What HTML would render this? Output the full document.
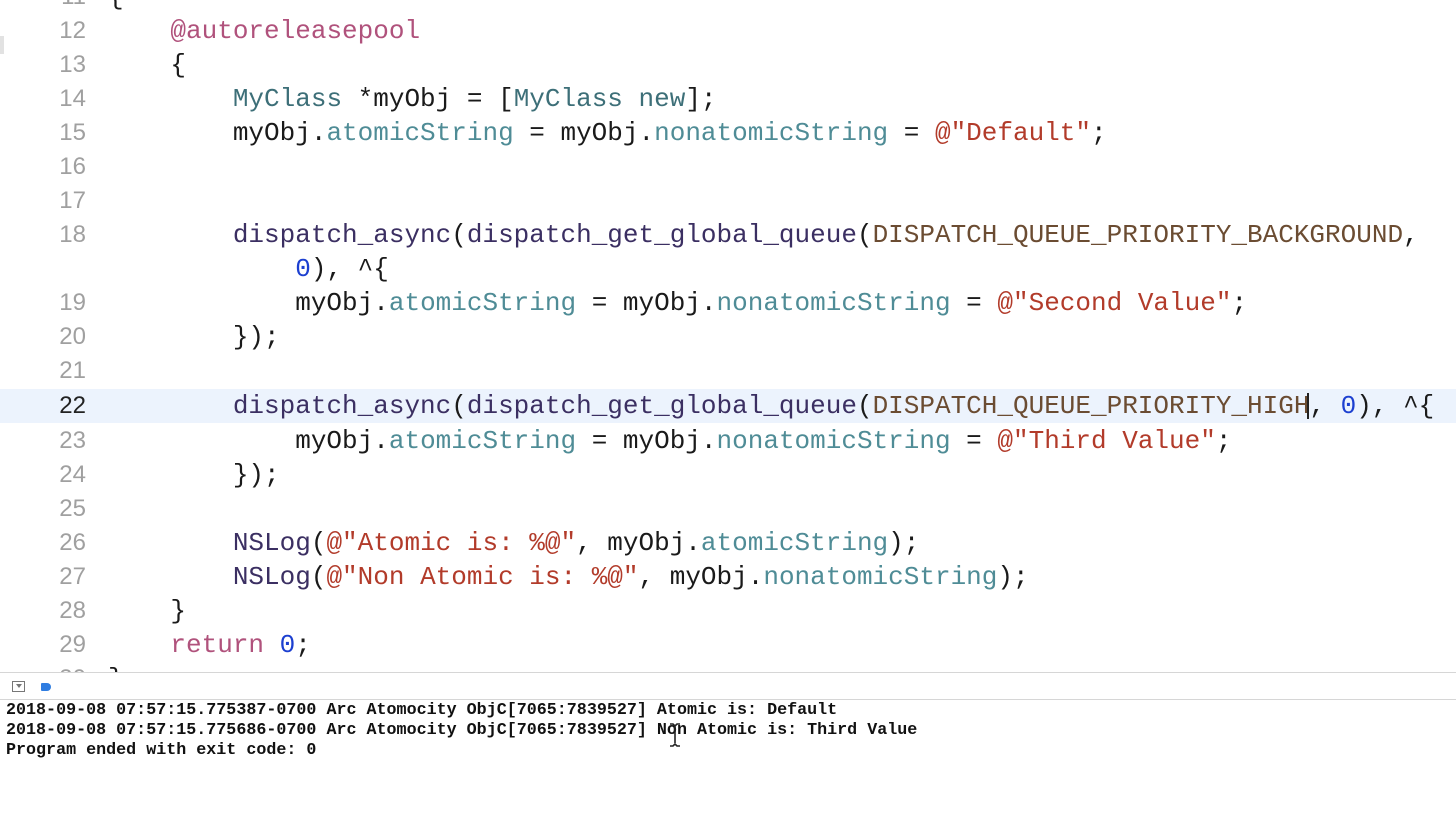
<!DOCTYPE html>
<html><head><meta charset="utf-8"><style>
body{margin:0;width:1456px;height:820px;overflow:hidden;background:#fff;position:relative;font-family:"Liberation Mono",monospace}
.r{position:absolute;left:0;width:1456px;height:34px;line-height:34px;font-size:26px;white-space:pre;color:#1a1a1a}
.n{position:absolute;left:0;width:86px;text-align:right;color:#a0a0a0;font-family:"Liberation Sans",sans-serif;font-size:24px}
.c{position:absolute;left:108px;letter-spacing:0}
.k{color:#b0527c}.t{color:#3d6f78}.p{color:#4f8c96}.s{color:#b23b2a}.m{color:#6b4c32}.d{color:#1c3fd0}.f{color:#3b2f62}
#con{position:absolute;left:0;top:672px;width:1456px;height:148px;background:#fff;border-top:1px solid #d6d6d6}
#bar{position:absolute;left:0;top:0;width:1456px;height:26px;border-bottom:1px solid #d6d6d6;background:#fff}
.cl{position:absolute;left:6px;font-size:16.7px;font-weight:bold;line-height:20px;white-space:pre;color:#111}
</style></head><body>
<div style="position:absolute;left:0;top:36px;width:4px;height:18px;background:#e2e2e2"></div>
<div class="r" style="top:-20px"><span class="n">11</span><span class="c">{</span></div>
<div class="r" style="top:14px"><span class="n">12</span><span class="c">    <span class="k">@autoreleasepool</span></span></div>
<div class="r" style="top:48px"><span class="n">13</span><span class="c">    {</span></div>
<div class="r" style="top:82px"><span class="n">14</span><span class="c">        <span class="t">MyClass</span> *myObj = [<span class="t">MyClass</span> <span class="t">new</span>];</span></div>
<div class="r" style="top:116px"><span class="n">15</span><span class="c">        myObj.<span class="p">atomicString</span> = myObj.<span class="p">nonatomicString</span> = <span class="s">@"Default"</span>;</span></div>
<div class="r" style="top:150px"><span class="n">16</span></div>
<div class="r" style="top:184px"><span class="n">17</span></div>
<div class="r" style="top:218px"><span class="n">18</span><span class="c">        <span class="f">dispatch_async</span>(<span class="f">dispatch_get_global_queue</span>(<span class="m">DISPATCH_QUEUE_PRIORITY_BACKGROUND</span>,</span></div>
<div class="r" style="top:252px"><span class="c">            <span class="d">0</span>), ^{</span></div>
<div class="r" style="top:286px"><span class="n">19</span><span class="c">            myObj.<span class="p">atomicString</span> = myObj.<span class="p">nonatomicString</span> = <span class="s">@"Second Value"</span>;</span></div>
<div class="r" style="top:320px"><span class="n">20</span><span class="c">        });</span></div>
<div class="r" style="top:354px"><span class="n">21</span></div>
<div class="r" style="top:389px;background:#ecf3fd"><span class="n" style="color:#222">22</span><span class="c">        <span class="f">dispatch_async</span>(<span class="f">dispatch_get_global_queue</span>(<span class="m">DISPATCH_QUEUE_PRIORITY_HIGH</span>, <span class="d">0</span>), ^{</span></div>
<div style="position:absolute;left:1307px;top:393px;width:2px;height:26px;background:#222"></div>
<div class="r" style="top:424px"><span class="n">23</span><span class="c">            myObj.<span class="p">atomicString</span> = myObj.<span class="p">nonatomicString</span> = <span class="s">@"Third Value"</span>;</span></div>
<div class="r" style="top:458px"><span class="n">24</span><span class="c">        });</span></div>
<div class="r" style="top:492px"><span class="n">25</span></div>
<div class="r" style="top:526px"><span class="n">26</span><span class="c">        <span class="f">NSLog</span>(<span class="s">@"Atomic is: %@"</span>, myObj.<span class="p">atomicString</span>);</span></div>
<div class="r" style="top:560px"><span class="n">27</span><span class="c">        <span class="f">NSLog</span>(<span class="s">@"Non Atomic is: %@"</span>, myObj.<span class="p">nonatomicString</span>);</span></div>
<div class="r" style="top:594px"><span class="n">28</span><span class="c">    }</span></div>
<div class="r" style="top:628px"><span class="n">29</span><span class="c">    <span class="k">return</span> <span class="d">0</span>;</span></div>
<div class="r" style="top:662px"><span class="n">30</span><span class="c">}</span></div>
<div id="con">
<div id="bar">
<div style="position:absolute;left:12px;top:8px;width:11px;height:9px;border:1px solid #777;background:#fff"><div style="position:absolute;left:3px;top:2px;width:0;height:0;border-left:3px solid transparent;border-right:3px solid transparent;border-top:4px solid #777"></div></div>
<div style="position:absolute;left:41px;top:10px;width:10px;height:8px;background:#2f7de1;border-radius:1px 4px 4px 1px"></div>
</div>
<div class="cl" style="top:28px">2018-09-08 07:57:15.775387-0700 Arc Atomocity ObjC[7065:7839527] Atomic is: Default</div>
<div class="cl" style="top:48px">2018-09-08 07:57:15.775686-0700 Arc Atomocity ObjC[7065:7839527] Non Atomic is: Third Value</div>
<div class="cl" style="top:68px">Program ended with exit code: 0</div>
<svg style="position:absolute;left:668px;top:50px" width="14" height="24" viewBox="0 0 14 24"><path d="M2 1h3l2 2 2-2h3M7 3v17M2 23h3l2-2 2 2h3" stroke="#222" stroke-width="1.6" fill="none"/></svg>
</div>
</body></html>
